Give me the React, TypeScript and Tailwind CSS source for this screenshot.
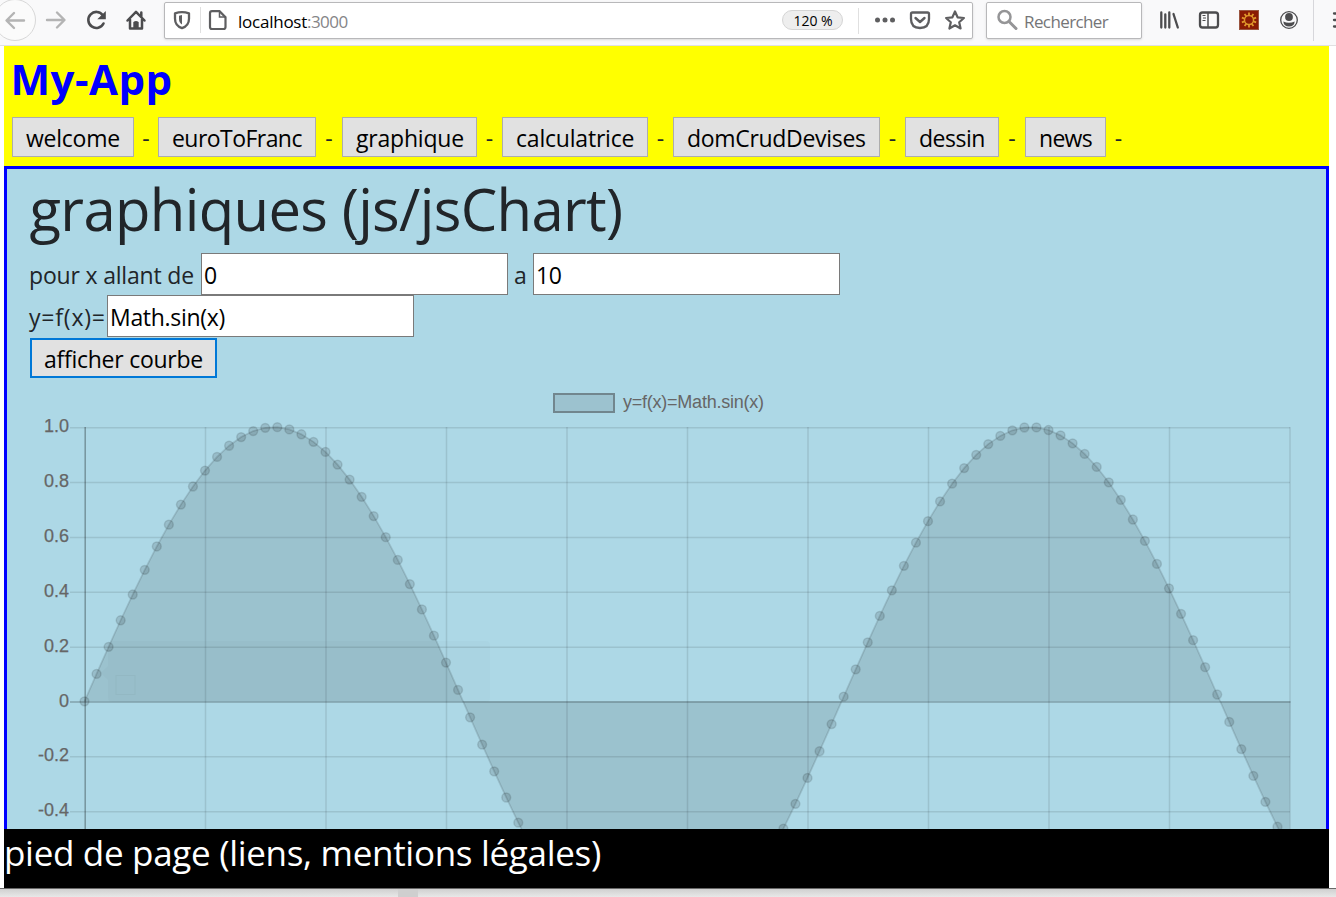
import React from "react";

function Toolbar() {
  return (
    <div className="flex h-[46px] w-full shrink-0 items-start overflow-hidden border-b border-[#e0e0e2] bg-[#f9f9fa]">
      <svg width="164" height="45" className="shrink-0" fill="none">
        <circle cx="15" cy="20" r="20.5" fill="#fbfbfb" stroke="#d8d8d8" />
        <path d="M24 20.5H7M14 13l-7.5 7.5L14 28" stroke="#b4b4b4" strokeWidth="2.4" strokeLinecap="round" strokeLinejoin="round" />
        <path d="M47 20h17M57 12.5l7.5 7.5-7.5 7.5" stroke="#b4b4b4" strokeWidth="2.4" strokeLinecap="round" strokeLinejoin="round" />
        <path d="M102.8 15.2A8 8 0 1 0 103.5 23.5" stroke="#4c4c4e" strokeWidth="2.6" strokeLinecap="round" />
        <path d="M105.8 11v8.2h-8.5z" fill="#4c4c4e" />
        <path d="M127.5 20.5l8.5-8.7 8.5 8.7M130 19.5V28.5H142V19.5M141.3 12.5v4" stroke="#4c4c4e" strokeWidth="2.5" strokeLinecap="round" strokeLinejoin="round" />
        <path d="M133.3 29v-6.5q0-1.5 2.7-1.5t2.7 1.5V29z" fill="#4c4c4e" />
      </svg>
      <div className="mt-[2px] flex h-[37px] w-[809px] shrink-0 rounded-[2px] border border-[#b8b8ba] bg-white shadow-sm">
        <svg width="73" height="35" viewBox="165 3 73 35" fill="none" className="shrink-0">
          <path d="M175 13.3q7-2.4 14 0v5.5q0 7-7 9.4-7-2.4-7-9.400z" stroke="#5e5e60" strokeWidth="2.3" strokeLinejoin="round" />
          <path d="M179 15.8l3-.8v9.500q-3-2-3-5.500z" fill="#5e5e60" />
          <path d="M200.5 7v26" stroke="#e0e0e0" />
          <path d="M212 11.2h7.500l6 6V27q0 2-2 2H212q-2 0-2-2V13.200q0-2 2-2z" stroke="#5e5e60" strokeWidth="2.2" />
          <path d="M219.5 11.5v5.500h6" stroke="#5e5e60" strokeWidth="1.5" />
        </svg>
        <span className="w-[69px] shrink-0 text-[17px] leading-[37px] tracking-[-0.24px] whitespace-nowrap text-black">localhost</span>
        <span className="flex-1 text-[17px] leading-[37px] tracking-[-0.55px] text-[#858587]">:3000</span>
        <span className="mt-[7px] h-5 w-[61px] shrink-0 rounded-full border border-[#d5d5d5] bg-[#eee] pl-px text-center text-[14px] leading-[19px] whitespace-nowrap text-black">120 %</span>
        <svg width="129" height="35" viewBox="843 3 129 35" fill="none" className="shrink-0">
          <path d="M858.5 8v26" stroke="#e0e0e0" />
          <g fill="#5e5e60"><circle cx="877.5" cy="20" r="2.5" /><circle cx="885" cy="20" r="2.5" /><circle cx="892.5" cy="20" r="2.5" /></g>
          <path d="M912.5 12.5h15q1.500 0 1.500 1.500v5q0 9-9 9t-9-9v-5q0-1.500 1.500-1.500z" stroke="#5e5e60" strokeWidth="2.3" />
          <path d="M915.5 18l4.500 4 4.500-4" stroke="#5e5e60" strokeWidth="2.4" strokeLinecap="round" strokeLinejoin="round" />
          <path d="M955 11.5l2.600 5.800 6.300.7-4.700 4.200 1.400 6.300-5.600-3.200-5.600 3.200 1.400-6.300-4.700-4.200 6.300-.7z" stroke="#5e5e60" strokeWidth="2.2" strokeLinejoin="round" />
        </svg>
      </div>
      <div className="mt-[2px] ml-[13px] flex h-[37px] w-[156px] shrink-0 rounded-[2px] border border-[#b8b8ba] bg-white shadow-sm">
        <svg width="37" height="35" viewBox="987 3 37 35" fill="none" className="shrink-0">
          <circle cx="1004.5" cy="17" r="6" stroke="#959597" strokeWidth="2.5" />
          <path d="M1009 21.5l7 7" stroke="#959597" strokeWidth="3" strokeLinecap="round" />
        </svg>
        <span className="text-[17px] leading-[37px] tracking-[-0.6px] text-[#757577]">Rechercher</span>
      </div>
      <svg width="194" height="45" viewBox="1142 0 194 45" className="shrink-0" fill="none">
        <path d="M1161.3 12.5v15M1165.3 14.5v13M1169.3 12.5v15M1173.5 14l4.300 13.500" stroke="#4c4c4e" strokeWidth="2.3" strokeLinecap="round" />
        <rect x="1200" y="12.5" width="18" height="15" rx="2.5" stroke="#4c4c4e" strokeWidth="2.3" />
        <path d="M1208 12v16" stroke="#4c4c4e" strokeWidth="1.5" />
        <path d="M1202.5 15.5h3M1203 18h3M1202.5 20.5h3" stroke="#4c4c4e" />
        <rect x="1239.5" y="10.5" width="19" height="19" fill="#8a1b04" stroke="#9a5540" />
        <circle cx="1249" cy="20" r="4.5" stroke="#e0982c" strokeWidth="1.4" />
        <g stroke="#e0982c" strokeWidth="1.8">
          {[0, 36, 72, 108, 144, 180, 216, 252, 288, 324].map((a) => <path key={a} d="M1249 15.3v-2.800" transform={`rotate(${a} 1249 20)`} />)}
        </g>
        <circle cx="1289" cy="20" r="8.3" stroke="#4c4c4e" strokeWidth="1.3" />
        <circle cx="1289" cy="17" r="3.9" fill="#4c4c4e" />
        <path d="M1283.3 21.5q5.700 2.500 11.400 0-.5 5-5.700 5t-5.700-5z" fill="#4c4c4e" />
        <path d="M1313.5 0v41" stroke="#d7d7db" />
        <path d="M1334 13.5h6M1334 20h6M1334 26.5h6" stroke="#4c4c4e" strokeWidth="2.3" strokeLinecap="round" />
      </svg>
    </div>
  );
}

const NAV = [
  { name: "welcome", box: "w-[122px] tracking-[-0.25px]", gap: "w-6" },
  { name: "euroToFranc", box: "w-[158px] tracking-[-0.55px]", gap: "w-[26px]" },
  { name: "graphique", box: "w-[135px] tracking-[-0.21px]", gap: "w-[25px]" },
  { name: "calculatrice", box: "w-[146px] tracking-[-0.2px]", gap: "w-[25px]" },
  { name: "domCrudDevises", box: "w-[207px] tracking-[-0.31px]", gap: "w-[25px]" },
  { name: "dessin", box: "w-[94px] tracking-[-0.48px]", gap: "w-[26px]" },
  { name: "news", box: "w-[81px] tracking-[-0.7px]", gap: "w-[25px]" },
];

function Header() {
  return (
    <header className="h-[120px] shrink-0 bg-[#ffff00] pl-2">
      <h2 className="-ml-[1.5px] h-[71px] text-[42px] leading-[66px] font-bold tracking-[0.5px] text-[#0000ff]">My-App</h2>
      <nav className="flex text-[23px]">
        {NAV.map((n) => (
          <React.Fragment key={n.name}>
            <button className={`${n.box} h-10 shrink-0 border border-[#adadad] bg-[#e1e1e1] pl-[13px] text-left leading-[41px] whitespace-nowrap text-black`}>
              {n.name}
            </button>
            <span className={`${n.gap} h-10 shrink-0 text-center leading-[42px] text-[#212529]`}>-</span>
          </React.Fragment>
        ))}
      </nav>
    </header>
  );
}

function Field({ value }: { value: string }) {
  return (
    <input
      type="text"
      defaultValue={value}
      className="h-[42px] w-[307px] shrink-0 border border-[#7a7a7a] bg-white pt-[2px] pl-[2px] tracking-[-0.3px] text-black outline-none"
    />
  );
}

const X0 = 84.5, DX = 12.05, Y0 = 701.3, AMP = 274.2;
const POINTS = Array.from({ length: 101 }, (_, i) => [X0 + i * DX, Y0 - AMP * Math.sin(i / 10)] as const);
const CURVE = POINTS.map(([x, y]) => `${x.toFixed(2)},${y.toFixed(2)}`).join(" L");
const TICKS = ["1.0", "0.8", "0.6", "0.4", "0.2", "0", "-0.2", "-0.4"];

function Chart() {
  return (
    <svg width="1319" height="451" viewBox="7 378 1319 451" className="block font-['Liberation_Sans',Arial,sans-serif] text-[18px]">
      <rect x="554" y="394" width="60" height="18" fill="#9cc2cf" stroke="#71868e" strokeWidth="2" />
      <text x="623" y="408" textLength="141" fill="#666">y=f(x)=Math.sin(x)</text>
      <g stroke="#000" strokeOpacity=".1" strokeWidth="1.5">
        {Array.from({ length: 10 }, (_, i) => <path key={i} d={`M${205.5 + i * 120.5} 427V829`} />)}
        {TICKS.map((t, i) => i !== 5 && <path key={t} d={`M70 ${(427.8 + i * 54.84).toFixed(1)}H1290`} />)}
      </g>
      <path d="M85.2 427V829" stroke="#000" strokeOpacity=".32" strokeWidth="1.5" />
      <path d="M70 702H1290.5" stroke="#000" strokeOpacity=".25" strokeWidth="1.7" />
      {TICKS.map((t, i) => (
        <text key={t} x="69" y={432.3 + i * 54.84} textAnchor="end" fill="#666" stroke="#666" strokeWidth=".25">{t}</text>
      ))}
      <path d={`M${X0},${Y0} L${CURVE} L1290.5,${Y0}Z`} fill="#000" fillOpacity=".1" />
      <path d={`M${CURVE}`} fill="none" stroke="#000" strokeOpacity=".12" strokeWidth="1.7" />
      {POINTS.map(([x, y], i) => <circle key={i} cx={x} cy={y} r="4.4" fill="#000" fillOpacity=".12" stroke="#000" strokeOpacity=".12" strokeWidth="1.5" />)}
      <path d="M112 641H486q4 0 4 4V698q0 4-4 4H112q-4 0-4-4V680l-8-7 8-7V645q0-4 4-4z" fill="#000" fillOpacity=".016" />
      <rect x="116" y="675.5" width="19" height="19" fill="none" stroke="#000" strokeOpacity=".03" />
    </svg>
  );
}

export default function App() {
  return (
    <div className="flex h-[897px] w-[1336px] flex-col overflow-hidden bg-white font-['Open_Sans','Noto_Sans',sans-serif]">
      <Toolbar />
      <div className="ml-1 flex w-[1325px] shrink-0 flex-col">
        <Header />
        <main className="h-[663px] border-x-[3px] border-t-[3px] border-[#0000ff] bg-[#add8e6] text-[23px] text-[#212529]">
          <h1 className="h-[84px] pl-[22.500px] text-[58px] leading-[79px] tracking-[-0.66px] whitespace-nowrap">graphiques (js/jsChart)</h1>
          <div className="flex h-[42px] pl-[22px] leading-[44px]">
            <label className="w-[172px] shrink-0 tracking-[-0.18px] whitespace-nowrap">pour x allant de</label>
            <Field value="0" />
            <label className="w-[25px] shrink-0 pl-[6px]">a</label>
            <Field value="10" />
          </div>
          <div className="flex h-[42px] pl-[22px] leading-[44px]">
            <label className="w-[78px] shrink-0 tracking-[0.8px] whitespace-nowrap">y=f(x)=</label>
            <Field value="Math.sin(x)" />
          </div>
          <div className="h-[41px] pt-px pl-[23px]">
            <button className="h-10 w-[187px] border-2 border-[#0078d7] bg-[#e1e1e1] pl-3 text-left leading-[39px] tracking-[-0.26px] whitespace-nowrap text-black">
              afficher courbe
            </button>
          </div>
          <Chart />
        </main>
        <footer className="h-[59px] bg-black text-[35px] leading-[47px] tracking-[-0.31px] text-white">pied de page (liens, mentions légales)</footer>
      </div>
      <div className="flex h-[9px] shrink-0 border-t border-[#686868] bg-gradient-to-b from-[#d0d0d0] to-[#e8e8e8] pl-[398px]">
        <div className="h-full w-5 bg-[#cfcfcf]" />
      </div>
    </div>
  );
}
